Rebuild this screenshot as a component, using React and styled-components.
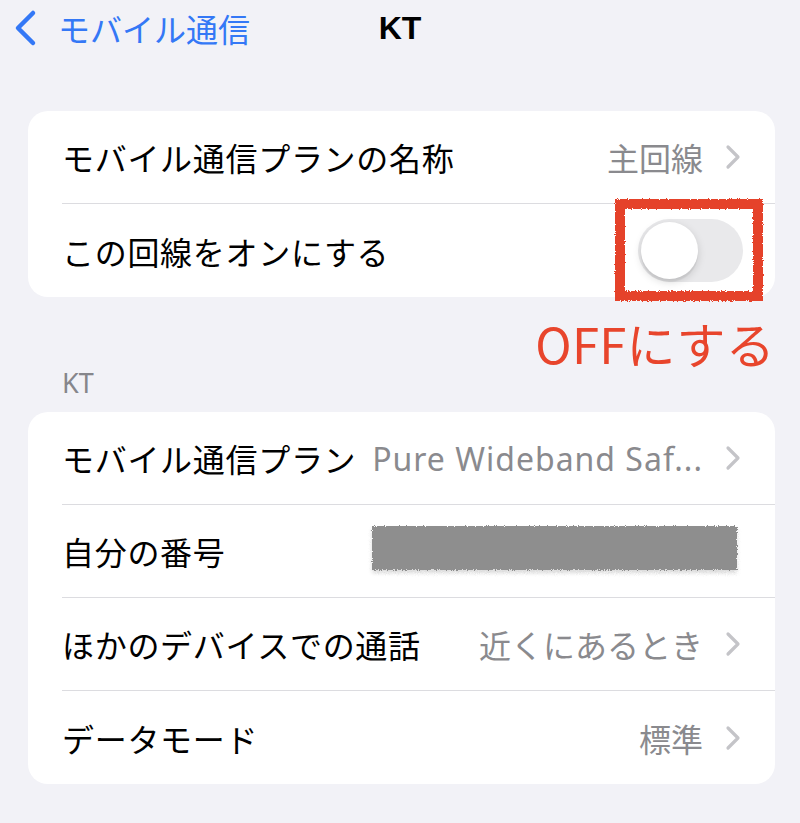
import React from "react";
import styled, { createGlobalStyle } from "styled-components";

const GlobalStyle = createGlobalStyle`
  body {
    margin: 0;
    background: #f2f2f7;
    font-family: "Noto Sans CJK JP", "Noto Sans", sans-serif;
    -webkit-font-smoothing: antialiased;
  }
`;

const Page = styled.div`
  width: 800px;
  height: 823px;
  overflow: hidden;
  background: #f2f2f7;
`;

const NavBar = styled.div`
  position: relative;
  display: flex;
  align-items: center;
  height: 56px;
  padding-left: 12px;
`;

const BackButton = styled.div`
  display: flex;
  align-items: center;
  gap: 20px;
  color: #3478f6;
  font-size: 32px;
`;

const Title = styled.div`
  position: absolute;
  left: 0;
  right: 0;
  top: 0;
  height: 56px;
  line-height: 56px;
  text-align: center;
  font-family: "Liberation Sans", Arial, sans-serif;
  font-weight: 700;
  font-size: 32px;
  color: #000;
  pointer-events: none;
`;

const Content = styled.div`
  padding: 55px 25px 0 28px;
`;

const Card = styled.div`
  position: relative;
  background: #fff;
  border-radius: 20px;
`;

const Row = styled.div`
  display: flex;
  align-items: center;
  height: 93px;
  margin-left: 34px;
  padding-right: 34px;
  border-bottom: ${p => (p.$last ? "none" : "1px solid #dcdce0")};
  box-sizing: border-box;
`;

const Label = styled.div`
  flex: none;
  font-size: 32px;
  letter-spacing: 0.7px;
  color: #000;
  white-space: nowrap;
`;

const Value = styled.div`
  flex: 1;
  text-align: right;
  font-size: 32px;
  color: #8a8a8e;
  white-space: nowrap;
  padding-left: 8px;
  margin-right: 22px;
`;

const LatinValue = styled(Value)`
  font-family: "Noto Sans", "Noto Sans CJK JP", sans-serif;
  letter-spacing: 1px;
`;

const Redacted = styled.div`
  flex: 1;
  display: flex;
  justify-content: flex-end;
  padding-bottom: 6px;
`;

const Blob = styled.div`
  width: 365px;
  height: 44px;
  margin-right: 4px;
  background: #8e8e8e;
  filter: url(#rough);
  box-shadow: 0 3px 4px rgba(0, 0, 0, 0.15);
`;

const Spacer = styled.div`
  flex: 1;
`;

const Toggle = styled.div`
  position: relative;
  width: 105px;
  height: 63px;
  border-radius: 32px;
  background: #e9e9eb;
  margin-right: -2px;
`;

const Knob = styled.div`
  position: absolute;
  left: 3px;
  top: 3px;
  width: 57px;
  height: 57px;
  border-radius: 50%;
  background: #fff;
  box-shadow: 0 3px 8px rgba(0, 0, 0, 0.15), 0 3px 1px rgba(0, 0, 0, 0.06);
`;

const Highlight = styled.div`
  position: absolute;
  right: 12px;
  top: 88px;
  width: 128px;
  height: 82px;
  border: 10px solid #e5432b;
  filter: url(#rough);
`;

const Callout = styled.div`
  display: flex;
  justify-content: flex-end;
  padding-top: 20px;
  height: 52px;
  line-height: 52px;
  font-size: 49px;
  color: #e8452c;
  letter-spacing: 0.3px;
`;

const SectionHeader = styled.div`
  padding: 0 0 11px 34px;
  margin-top: -5px;
  font-family: "Noto Sans", sans-serif;
  font-size: 27px;
  color: #86868b;
`;

const Chevron = () => (
  <svg width="16" height="26" viewBox="0 0 16 26" fill="none">
    <path d="M3 3l10 10-10 10" stroke="#c4c4c8" strokeWidth="3.2" strokeLinecap="round" strokeLinejoin="round" />
  </svg>
);

const BackChevron = () => (
  <svg width="26" height="38" viewBox="0 0 26 38" fill="none">
    <path d="M21 4L6 19l15 15" stroke="#3478f6" strokeWidth="4.5" strokeLinecap="round" strokeLinejoin="round" />
  </svg>
);

export default function App() {
  return (
    <Page>
      <GlobalStyle />
      <svg width="0" height="0" style={{ position: "absolute" }}>
        <filter id="rough">
          <feTurbulence type="fractalNoise" baseFrequency="0.9" numOctaves="2" result="n" />
          <feDisplacementMap in="SourceGraphic" in2="n" scale="4" />
        </filter>
      </svg>
      <NavBar>
        <BackButton>
          <BackChevron />
          モバイル通信
        </BackButton>
        <Title>KT</Title>
      </NavBar>
      <Content>
        <Card>
          <Row>
            <Label>モバイル通信プランの名称</Label>
            <Value>主回線</Value>
            <Chevron />
          </Row>
          <Row $last>
            <Label>この回線をオンにする</Label>
            <Spacer />
            <Toggle>
              <Knob />
            </Toggle>
          </Row>
          <Highlight />
        </Card>
        <Callout>OFFにする</Callout>
        <SectionHeader>KT</SectionHeader>
        <Card>
          <Row>
            <Label>モバイル通信プラン</Label>
            <LatinValue>Pure Wideband Saf...</LatinValue>
            <Chevron />
          </Row>
          <Row>
            <Label>自分の番号</Label>
            <Redacted>
              <Blob />
            </Redacted>
          </Row>
          <Row>
            <Label>ほかのデバイスでの通話</Label>
            <Value>近くにあるとき</Value>
            <Chevron />
          </Row>
          <Row $last>
            <Label>データモード</Label>
            <Value>標準</Value>
            <Chevron />
          </Row>
        </Card>
      </Content>
    </Page>
  );
}
